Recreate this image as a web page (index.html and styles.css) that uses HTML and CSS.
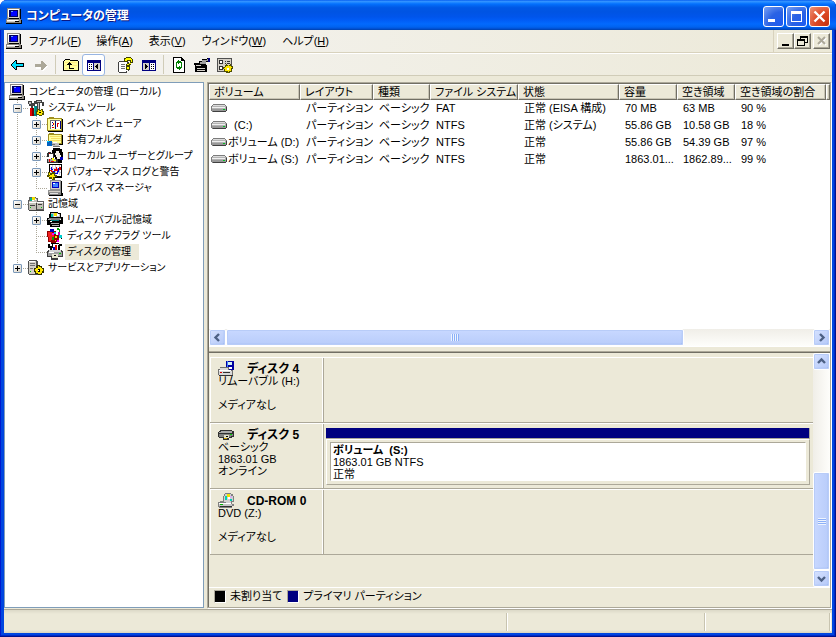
FILE: index.html
```html
<!DOCTYPE html>
<html lang="ja">
<head>
<meta charset="utf-8">
<title>コンピュータの管理</title>
<link rel="stylesheet" href="styles.css">
</head>
<body>
<svg class="sprite" aria-hidden="true">
  <symbol id="computer" viewBox="0 0 16 16">
    <path fill="#8c8880" d="M1 0h13v11H1zM0 11h15v4H0z"/>
    <path fill="#d4d0c8" d="M2 1h11v9H2zM1 12h12v2H1z"/>
    <path fill="#fff" d="M2 1h11v1H2zM2 1h1v8H2zM1 12h11v1H1z"/>
    <path fill="#000" d="M14 1h1v10h-1zM0 15h15v1H0zM15 12h1v4h-1zM9 13h4v1H9zM3 10h10v1H3z"/>
    <path fill="#000060" d="M3 2h9v7H3z"/><path fill="#0000ff" d="M5 3h6v5H5z"/>
    <path fill="#6a9cff" d="M5 3h2v1H5z"/>
  </symbol>
  <symbol id="tools" viewBox="0 0 16 16">
    <path fill="#404040" d="M0 1h4v2h2V1h1v5H5v3H3V6H1V4H0zM8 0h6v2h2v4h-2V3h-2v7H9V4H7V1z"/>
    <path fill="#c0c0c0" d="M1 2h2v2H1zM9 1h4v1H9zM10 3h1v6h-1z"/>
    <path fill="#e00000" d="M2 8h3v8H2z"/><path fill="#800000" d="M4 8h2v8H4z"/>
    <path fill="#008080" d="M6 6h3v10H6z"/><path fill="#00c0a0" d="M6 7h1v7H6z"/>
    <path fill="#505000" d="M9 9h2v1h2V9h2v2h1v4h-2v1h-3v-1H8v-4h1z"/>
    <path fill="#ffe800" d="M10 10h1v1h2v-1h1v2h1v1h-1v2h-3v-1H9v-2h1z"/><path d="M11 12h2v1h-2z"/>
  </symbol>
  <symbol id="event" viewBox="0 0 16 16">
    <path fill="#a09020" d="M0 2h2V1h5v1h8v13H0z"/><path fill="#ffff9c" d="M1 3h13v11H1z"/>
    <path fill="#000" d="M15 3h1v13H1v-1h14z"/><path fill="#707070" d="M3 4h10v1H3zM3 4h1v9H3z"/>
    <path fill="#fff" d="M4 5h3v8H4zM8 5h5v8H8z"/>
    <path fill="#000080" d="M5 6h1v1H5zM5 9h1v1H5zM8 5h1v8H8zM13 5h1v8h-1z"/>
    <path fill="#e00000" d="M6 7h1v2H6zM10 7h2v1h-2zM10 8h1v3h-1zM5 11h2v1H5z"/>
  </symbol>
  <symbol id="folder" viewBox="0 0 16 16">
    <path fill="#a09020" d="M1 2h1V1h5v1h8v10H1z"/><path fill="#ffff9c" d="M2 3h12v8H2z"/>
    <path fill="#f4dc60" d="M3 4h11v1H3zM4 6h10v1H4zM3 8h11v1H3z"/><path d="M15 3h1v10H7v-1h8z"/>
    <path fill="#0060c0" d="M0 9h5v5H0z"/><path fill="#00d8ff" d="M0 9h2v1H0z"/>
    <path fill="#c0c0c0" d="M5 10h5v1h2v3H5z"/><path fill="#707070" d="M6 14h7v1H6zM5 12h3v1H5z"/><path fill="#fff" d="M6 10h4v1H6z"/>
  </symbol>
  <symbol id="users" viewBox="0 0 16 16">
    <path d="M6 0h7v1h2v3h1v5h-2v2h1v4h-4v-2H8V9H5V2h1z"/>
    <path fill="#f4f0e8" d="M9 3h3v2h1v2h1v4h-3v2h-1V9H9V7H8V5h1z"/><path fill="#0000c0" d="M13 9h3v3h-3z"/>
    <path fill="#303030" d="M1 4h3v1h3v6h4v4H0v-4h2V9H0V5h1z"/><path fill="#fff" d="M2 6h4v4H4v1H2z"/>
    <path fill="#9c9c9c" d="M1 11h8v3H1z"/><path fill="#ffff00" d="M5 10h2v2h2v1H6v-1H5z"/><path fill="#e00000" d="M2 5h1v1H2zM2 11h1v3H2zM4 13h3v1H4z"/>
  </symbol>
  <symbol id="perf" viewBox="0 0 16 16">
    <path d="M2 0h13v14H2z"/><path fill="#fff" d="M3 1h11v11H3z"/>
    <path fill="#c8c8dc" d="M5 1h1v10H5zM8 1h1v10H8zM12 1h1v10h-1zM3 4h11v1H3zM3 8h11v1H3z"/>
    <path fill="#e00000" d="M3 6h2v1h2V5h2V3h1v4H8v1H4zM10 5h2V3h2v3h-2v1h-2z"/>
    <path fill="#0000e0" d="M4 3h1v2h1v2h2v2h2V7h1V4h1v4h-1v2H8V8H6V6H4z"/>
    <path fill="#505000" d="M1 8h2v1h2V8h3v3h2v2H8v3H5v-1H2v-2H0v-2h1z"/><path fill="#ffe800" d="M2 9h1v2h2v-1h2v2h1v1H6v2H5v-2H2v-1h1v-1H2z"/>
  </symbol>
  <symbol id="device" viewBox="0 0 16 16">
    <path fill="#909090" d="M3 0h11v10H3zM1 10h13v3H1z"/><path fill="#d4d0c8" d="M4 1h9v8H4zM2 11h11v1H2z"/>
    <path fill="#0000c0" d="M5 2h7v6H5z"/><path fill="#4084ff" d="M6 3h5v4H6z"/><path fill="#fff" d="M6 3h2v1H6z"/>
    <path d="M14 1h1v12h1v3H2v-1h12z"/><path fill="#808080" d="M1 13h13v2H1z"/><path fill="#e0e0e0" d="M3 13h8v1H3z"/>
  </symbol>
  <symbol id="storage" viewBox="0 0 16 16">
    <path fill="#606060" d="M1 1h7v1h2v3h6v10H1v-1H0V4h1z"/><path fill="#c4c0b8" d="M2 2h6v1h1v3h6v7H9v1H1V5h1z"/>
    <path fill="#00b090" d="M2 2h2v3H2z"/><path fill="#f0e000" d="M4 1h3v3H4z"/><path fill="#fff" d="M4 4h2v1H4zM7 3h1v1H7zM1 6h7v1H1zM9 6h6v1H9z"/>
    <path fill="#404040" d="M8 7h1v7H8zM2 9h5v1H2zM10 8h4v1h-4zM1 14h15v1H1z"/><path fill="#00c000" d="M2 11h1v1H2zM13 11h1v1h-1z"/>
  </symbol>
  <symbol id="removable" viewBox="0 0 16 16">
    <path d="M3 0h8v1h3v4h2v7h-3v3H3v-2H0V6h2V2h1z"/><path fill="#c0c0c0" d="M4 1h7v1h2v3H4z"/>
    <path fill="#f0e000" d="M7 1h3v3H7z"/><path fill="#00c8b0" d="M4 2h2v3H4z"/><path fill="#fff" d="M7 4h2v1H7zM10 2h2v2h-2z"/>
    <path fill="#808080" d="M2 6h12v2H2z"/><path fill="#008080" d="M4 8h8v1H4z"/><path fill="#b0b0b0" d="M1 7h3v1H1zM4 11h8v1H4zM5 13h7v1H5z"/><path fill="#fff" d="M13 7h1v1h-1zM3 9h2v1H3z"/>
  </symbol>
  <symbol id="defrag" viewBox="0 0 16 16">
    <path fill="#900000" d="M0 3h3V1h4v2h2v4h3v7H9v1H4v-1H1z"/><path fill="#f02020" d="M1 4h4v3h2v5H4v1H2z"/>
    <path fill="#0000c0" d="M3 1h4v3H3z"/><path fill="#ff00ff" d="M5 5h2v2H5zM10 12h2v2h-2z"/>
    <path fill="#00a000" d="M10 0h2v1h1v3h-1V2h-2zM5 9h2v3H5z"/><path fill="#00d0d0" d="M12 7h3v3h-3zM7 4h2v2H7z"/>
    <path fill="#c000c0" d="M11 4h2v3h-2z"/><path fill="#f0e000" d="M8 8h2v2H8zM8 12h1v1H8z"/><path d="M4 15h8v1H4zM14 10h1v1h-1z"/>
  </symbol>
  <symbol id="disks" viewBox="0 0 16 16">
    <path d="M1 0h2v2h2V0h1v4H5v3H3V4H1zM12 0h3v2h-2v5h-2V1h1z"/><path fill="#e00000" d="M8 1h2v6H8z"/><path fill="#0000c0" d="M6 3h2v4H6z"/>
    <path fill="#404040" d="M1 6h14v1h1v6h-5v3H4v-3H0V7h1z"/><path fill="#d4d4d4" d="M2 6h12v2H2z"/><path fill="#a0a0a0" d="M1 8h14v4H1z"/>
    <path fill="#fff" d="M2 8h5v1H2z"/><path fill="#00d000" d="M12 9h2v1h-2z"/><path fill="#e8e8d0" d="M5 10h6v4H5z"/><path d="M7 11h2v1H7z"/>
  </symbol>
  <symbol id="services" viewBox="0 0 16 16">
    <path fill="#505050" d="M1 0h8v1h1v14H1v-1H0V1h1z"/><path fill="#d4d0c8" d="M1 1h7v13H1z"/><path fill="#fff" d="M1 1h6v1H1z"/>
    <path fill="#707070" d="M2 3h5v1H2zM2 5h5v1H2zM2 8h3v1H2z"/><path fill="#00c000" d="M2 11h1v1H2z"/>
    <path fill="#303000" d="M9 5h3v1h2v2h2v5h-2v2h-4v-1H7v-2H6V8h2V6h1z"/><path fill="#ffe800" d="M10 6h1v1h2v1h1v1h1v2h-1v2h-1v1h-3v-1H8v-2H7V9h1V8h2z"/><path d="M10 9h2v3h-2z"/><path fill="#fff" d="M10 10h1v1h-1z"/>
  </symbol>
  <symbol id="drive" viewBox="0 0 16 8">
    <path fill="#7c7c7c" d="M2 0h12v1h1v1h1v5h-1v1H1V7H0V2h1V1h1z"/><path fill="#dcdcdc" d="M2 1h12v1H2z"/><path fill="#b4b4b4" d="M1 2h14v3H1z"/>
    <path fill="#f0f0f0" d="M1 3h13v1H1z"/><path fill="#989898" d="M1 5h14v2H1z"/><path fill="#00c020" d="M12 5h2v1h-2z"/><path fill="#404040" d="M15 3h1v4h-1zM2 7h13v1H2z"/>
  </symbol>
  <symbol id="floppydrive" viewBox="0 0 16 16">
    <path fill="#0000a0" d="M8 0h8v9H9V7H8z"/><path fill="#4080ff" d="M9 0h1v6H9z"/><path fill="#d0f0f0" d="M10 1h4v3h-4z"/><path fill="#fff" d="M11 6h3v2h-3z"/>
    <path fill="#707070" d="M2 6h9v3h4v6H1v-1H0V8h2z"/><path fill="#d8d8d8" d="M2 7h8v3H2zM1 10h13v4H1z"/><path fill="#fff" d="M1 9h12v1H1z"/><path fill="#303030" d="M5 11h7v1H5zM1 14h14v1H1z"/><path fill="#e00000" d="M2 11h2v1H2z"/>
  </symbol>
  <symbol id="harddisk" viewBox="0 0 16 16">
    <path fill="#303030" d="M2 3h12v1h2v6h-2v1h-3v2H5v-2H1v-1H0V5h1V4h1z"/><path fill="#a8a8a8" d="M3 4h11v2H1V5h2z"/><path fill="#808080" d="M1 7h14v2H1zM1 9h12v1H1z"/>
    <path fill="#00d000" d="M12 7h2v1h-2z"/><path fill="#e0e0c8" d="M6 8h5v3H6z"/><path d="M8 9h2v1H8z"/><path fill="#d0a000" d="M6 11h3v1H6z"/>
  </symbol>
  <symbol id="cdrom" viewBox="0 0 16 16">
    <path fill="#808080" d="M7 0h6v1h2v2h1v6h-2v2h2v2h-2v2H1v-1H0V9h2V8h3V3h1V1h1z"/><path fill="#d0d0d0" d="M7 1h6v2h2v5h-2v2H8V9H6V3h1z"/>
    <path fill="#f0e000" d="M9 1h3v3H9z"/><path fill="#00d0b0" d="M7 3h2v4H7zM12 6h2v2h-2z"/><path fill="#d8b0f0" d="M12 3h2v2h-2z"/><path fill="#fff" d="M10 4h2v2h-2zM1 10h12v1H1z"/>
    <path fill="#c8c8c8" d="M1 11h13v2H1z"/><path fill="#00b000" d="M2 11h3v1H2z"/><path fill="#303030" d="M2 13h12v1H2z"/>
  </symbol>
  <symbol id="back" viewBox="0 0 16 16"><path d="M1 7h1V6h1V5h1V4h1V3h2v3h7v4H7v3H5v-1H4v-1H3v-1H2V9H1z"/><path fill="#00e0ff" d="M2 9V7h1V6h1V5h1V4h1v3h7v2H6v3H5v-1H4v-1H3V9z"/></symbol>
  <symbol id="forward" viewBox="0 0 16 16"><path fill="#fff" d="M3 8h6V5h2v1h1v1h1v1h1v1h1v1h-1v1h-1v1h-1v1h-1v1H9v-2H3z"/><path fill="#aca899" d="M2 7h6V4h2v1h1v1h1v1h1v1h1v1h-1v1h-1v1h-1v1h-1v1H8v-3H2z"/></symbol>
  <symbol id="up" viewBox="0 0 16 16"><path d="M1 3h1V2h5v1h8v1h1v10H0V4h1z"/><path fill="#ffff9c" d="M2 3h5v1h8v9H1V4h1z"/><path fill="#ffec80" d="M2 5h12v1H2zM2 8h2v1H2zM9 8h5v1H9zM2 11h3v1H2z"/><path d="M6 5h1v1h1v1h1v1H7v3h4v1H6V8H4V7h1V6h1z"/></symbol>
  <symbol id="treeview" viewBox="0 0 16 16"><path fill="#000080" d="M1 3h14v11H1z"/><path fill="#fff" d="M2 6h5v7H2z"/><path fill="#d4d0c8" d="M8 6h6v7H8z"/><path d="M3 7h1v1H3zM5 7h1v1H5zM3 9h1v1H3zM5 9h1v1H5zM3 11h1v1H3zM5 11h1v1H5zM9 9h1V8h1V7h1v5h-1v-1h-1v-1H9z"/></symbol>
  <symbol id="actionpane" viewBox="0 0 16 16"><path fill="#000080" d="M1 3h14v11H1z"/><path fill="#d4d0c8" d="M2 6h6v7H2z"/><path fill="#fff" d="M9 6h5v7H9z"/><path d="M4 7h1v1h1v1h1v1H6v1H5v1H4zM10 7h1v1h-1zM12 7h1v1h-1zM10 9h1v1h-1zM12 9h1v1h-1zM10 11h1v1h-1zM12 11h1v1h-1z"/></symbol>
  <symbol id="help" viewBox="0 0 16 16"><path fill="#404040" d="M1 4h8v1h2v9H9v2H1v-1H0V5h1z"/><path fill="#fff" d="M1 5h8v8h1v1H8v1H1z"/><path fill="#707070" d="M3 7h4v1H3zM3 9h4v1H3zM3 11h4v1H3z"/><path fill="#404000" d="M6 1h2V0h5v1h1v1h1v4h-2v2h-1v5H8V7h2V6h2V4h-2v1H6z"/><path fill="#ffff00" d="M7 2h1V1h5v1h1v3h-1v2h-2v1H9V7h2V6h2V3H9v1H7zM9 10h2v2H9z"/></symbol>
  <symbol id="refresh" viewBox="0 0 16 16"><path d="M2 0h9v1h1v1h1v1h1v13H2z"/><path fill="#fff" d="M3 1h7v3h3v11H3z"/><path fill="#008000" d="M7 3h1v1h2v1h1v3h-1V6H8v1H7V6H6v2H5V5h1V4h1zM5 8h1v2h2V9h1v1h1V8h1v3h-1v1H9v1H8v-1H6v-1H5z"/></symbol>
  <symbol id="properties" viewBox="0 0 16 16"><path d="M0 6h5V4h3V2h5V1h2v4h-3v3h1v7H1V8H0z"/><path fill="#a0a0a0" d="M8 3h5V2h1v2h-2v3H6V5h2z"/><path fill="#000080" d="M14 1h2v4h-2z"/><path fill="#d4d0c8" d="M2 8h5v1H2zM3 11h8v1H3zM3 13h8v1H3z"/></symbol>
  <symbol id="settings" viewBox="0 0 16 16"><path fill="#505050" d="M0 1h15v9h-3v5H0z"/><path fill="#d4d0c8" d="M1 2h13v7H9v5H1z"/><path fill="#303030" d="M2 3h4v4H2zM8 4h1v1H8zM10 4h3v1h-3zM8 6h1v1H8zM10 6h3v1h-3zM2 9h4v4H2z"/><path fill="#fff" d="M3 4h2v2H3zM3 10h2v2H3z"/><path fill="#505000" d="M9 7h1v1h3V7h1v2h2v3h-1v3h-2v1H9v-1H7v-3H6v-2h2V8h1z"/><path fill="#ffe800" d="M9 9h2V8h1v1h2v1h1v1h-1v3h-2v1h-1v-1H8v-2H7v-1h1v-1h1z"/><path fill="#fff" d="M10 11h2v2h-2z"/></symbol>
</svg>

<div class="window">
  <header class="titlebar">
    <svg class="icon"><use href="#computer"/></svg>
    <h1 class="title">コンピュータの管理</h1>
    <div class="captions">
      <button class="caption" aria-label="最小化"><svg viewBox="0 0 21 21"><path fill="#fff" d="M5 13h7v3H5z"/></svg></button>
      <button class="caption" aria-label="最大化"><svg viewBox="0 0 21 21"><path fill="#fff" fill-rule="evenodd" d="M5 5h11v11H5zM6 8v7h9V8z"/></svg></button>
      <button class="caption close" aria-label="閉じる"><svg viewBox="0 0 21 21"><path class="smooth" stroke="#fff" stroke-width="2.4" d="M5.5 5.5l10 10M15.5 5.5l-10 10"/></svg></button>
    </div>
  </header>

  <nav class="menubar">
    <svg class="icon"><use href="#computer"/></svg>
    <div class="menus">
      <button>ファイル(<u>F</u>)</button>
      <button>操作(<u>A</u>)</button>
      <button>表示(<u>V</u>)</button>
      <button>ウィンドウ(<u>W</u>)</button>
      <button>ヘルプ(<u>H</u>)</button>
    </div>
    <div class="mdi">
      <button aria-label="ウィンドウを最小化"><svg viewBox="0 0 13 12"><path d="M3 9h7v2H3z"/></svg></button>
      <button aria-label="元のサイズに戻す"><svg viewBox="0 0 13 12"><path fill-rule="evenodd" d="M4 1h8v7H9v3H1V4h3zM5 3v1h4v3h2V3zM2 6v4h6V6z"/></svg></button>
      <button class="apart" aria-label="ウィンドウを閉じる" disabled><svg viewBox="0 0 13 12"><path class="smooth" stroke="#fff" stroke-width="2" d="M4 3l7 7M11 3l-7 7"/><path class="smooth" stroke="#aca899" stroke-width="2" d="M3 2l7 7M10 2l-7 7"/></svg></button>
    </div>
  </nav>

  <div class="toolbar">
    <button aria-label="戻る"><svg class="icon"><use href="#back"/></svg></button>
    <button aria-label="進む"><svg class="icon"><use href="#forward"/></svg></button>
    <span class="sep"></span>
    <button aria-label="上へ"><svg class="icon"><use href="#up"/></svg></button>
    <button class="pressed" aria-label="コンソール ツリー"><svg class="icon"><use href="#treeview"/></svg></button>
    <span class="sep wide"></span>
    <button aria-label="ヘルプ"><svg class="icon"><use href="#help"/></svg></button>
    <button aria-label="操作ウィンドウ"><svg class="icon"><use href="#actionpane"/></svg></button>
    <span class="sep"></span>
    <button aria-label="最新の情報に更新"><svg class="icon"><use href="#refresh"/></svg></button>
    <button aria-label="プロパティ"><svg class="icon"><use href="#properties"/></svg></button>
    <button aria-label="設定"><svg class="icon"><use href="#settings"/></svg></button>
  </div>

  <main class="content">
    <aside class="tree">
      <div class="node"><svg class="icon"><use href="#computer"/></svg><span class="label">コンピュータの管理 (ローカル)</span></div>
      <ul>
        <li>
          <div class="node"><span class="branch"><button class="expander open" aria-label="折りたたむ"></button></span><svg class="icon"><use href="#tools"/></svg><span class="label">システム ツール</span></div>
          <ul>
            <li><div class="node"><span class="branch"><button class="expander" aria-label="展開"></button></span><svg class="icon"><use href="#event"/></svg><span class="label">イベント ビューア</span></div></li>
            <li><div class="node"><span class="branch"><button class="expander" aria-label="展開"></button></span><svg class="icon"><use href="#folder"/></svg><span class="label">共有フォルダ</span></div></li>
            <li><div class="node"><span class="branch"><button class="expander" aria-label="展開"></button></span><svg class="icon"><use href="#users"/></svg><span class="label">ローカル ユーザーとグループ</span></div></li>
            <li><div class="node"><span class="branch"><button class="expander" aria-label="展開"></button></span><svg class="icon"><use href="#perf"/></svg><span class="label">パフォーマンス ログと警告</span></div></li>
            <li><div class="node"><span class="branch"></span><svg class="icon"><use href="#device"/></svg><span class="label">デバイス マネージャ</span></div></li>
          </ul>
        </li>
        <li>
          <div class="node"><span class="branch"><button class="expander open" aria-label="折りたたむ"></button></span><svg class="icon"><use href="#storage"/></svg><span class="label">記憶域</span></div>
          <ul>
            <li><div class="node"><span class="branch"><button class="expander" aria-label="展開"></button></span><svg class="icon"><use href="#removable"/></svg><span class="label">リムーバブル記憶域</span></div></li>
            <li><div class="node"><span class="branch"></span><svg class="icon"><use href="#defrag"/></svg><span class="label">ディスク デフラグ ツール</span></div></li>
            <li><div class="node"><span class="branch"></span><svg class="icon"><use href="#disks"/></svg><span class="label selected">ディスクの管理</span></div></li>
          </ul>
        </li>
        <li><div class="node"><span class="branch"><button class="expander" aria-label="展開"></button></span><svg class="icon"><use href="#services"/></svg><span class="label">サービスとアプリケーション</span></div></li>
      </ul>
    </aside>

    <section class="detail">
      <div class="volumes">
        <div class="tablewrap">
          <table>
            <colgroup><col class="c-name"><col class="c-layout"><col class="c-type"><col class="c-fs"><col class="c-state"><col class="c-size"><col class="c-size"><col class="c-pct"><col></colgroup>
            <thead><tr><th>ボリューム</th><th>レイアウト</th><th>種類</th><th>ファイル システム</th><th>状態</th><th>容量</th><th>空き領域</th><th>空き領域の割合</th><th></th></tr></thead>
            <tbody>
              <tr><td><svg class="drive"><use href="#drive"/></svg></td><td>パーティション</td><td>ベーシック</td><td>FAT</td><td>正常 (EISA 構成)</td><td>70 MB</td><td>63 MB</td><td>90 %</td><td></td></tr>
              <tr><td><svg class="drive"><use href="#drive"/></svg>&nbsp; (C:)</td><td>パーティション</td><td>ベーシック</td><td>NTFS</td><td>正常 (システム)</td><td>55.86 GB</td><td>10.58 GB</td><td>18 %</td><td></td></tr>
              <tr><td><svg class="drive"><use href="#drive"/></svg>ボリューム (D:)</td><td>パーティション</td><td>ベーシック</td><td>NTFS</td><td>正常</td><td>55.86 GB</td><td>54.39 GB</td><td>97 %</td><td></td></tr>
              <tr><td><svg class="drive"><use href="#drive"/></svg>ボリューム (S:)</td><td>パーティション</td><td>ベーシック</td><td>NTFS</td><td>正常</td><td>1863.01...</td><td>1862.89...</td><td>99 %</td><td></td></tr>
            </tbody>
          </table>
        </div>
        <div class="scroll horizontal">
          <button class="arrow" aria-label="左へ"><svg viewBox="0 0 9 9"><path d="M6 1L2.500 4.500L6 8"/></svg></button>
          <div class="track"><div class="thumb"></div></div>
          <button class="arrow" aria-label="右へ"><svg viewBox="0 0 9 9"><path d="M3 1L6.500 4.500L3 8"/></svg></button>
        </div>
      </div>

      <div class="splitter"></div>

      <div class="lower">
        <div class="diskview">
          <div class="disks">
            <article class="disk">
              <div class="diskinfo"><h2><svg class="icon"><use href="#floppydrive"/></svg>ディスク 4</h2><p>リムーバブル (H:)</p><p>&nbsp;</p><p>メディアなし</p></div>
              <div class="partitions"></div>
            </article>
            <article class="disk">
              <div class="diskinfo"><h2><svg class="icon"><use href="#harddisk"/></svg>ディスク 5</h2><p>ベーシック</p><p>1863.01 GB</p><p>オンライン</p></div>
              <div class="partitions"><div class="stripe"></div><div class="partition"><div class="face"><h3>ボリューム &nbsp;(S:)</h3><p>1863.01 GB NTFS</p><p>正常</p></div></div></div>
            </article>
            <article class="disk">
              <div class="diskinfo"><h2><svg class="icon"><use href="#cdrom"/></svg>CD-ROM 0</h2><p>DVD (Z:)</p><p>&nbsp;</p><p>メディアなし</p></div>
              <div class="partitions"></div>
            </article>
          </div>
          <div class="scroll vertical">
            <button class="arrow" aria-label="上へスクロール"><svg viewBox="0 0 9 9"><path d="M1 6L4.500 2.500L8 6"/></svg></button>
            <div class="track"><div class="thumb"></div></div>
            <button class="arrow" aria-label="下へスクロール"><svg viewBox="0 0 9 9"><path d="M1 3L4.500 6.500L8 3"/></svg></button>
          </div>
        </div>
        <div class="legend"><span class="swatch"></span>未割り当て<span class="swatch primary"></span>プライマリ パーティション</div>
      </div>
    </section>
  </main>

  <footer class="status"><span></span><span></span><span></span></footer>
</div>
</body>
</html>
```

FILE: styles.css
```css
* { box-sizing: border-box; }

html, body { height: 100%; }

body {
  margin: 0;
  background: #fff;
  color: #000;
  font: 11px/16px "Liberation Sans", "Noto Sans CJK JP", sans-serif;
  font-feature-settings: "palt";
  overflow: hidden;
}

button {
  margin: 0;
  padding: 0;
  border: 0;
  background: none;
  color: inherit;
  font: inherit;
  font-feature-settings: inherit;
}

h1, h2, h3, p, ul { margin: 0; padding: 0; font-size: inherit; list-style: none; }

svg { display: block; shape-rendering: crispEdges; }
.smooth { shape-rendering: auto; fill: none; }
.sprite { display: none; }
.icon { flex: none; width: 16px; height: 16px; }

.window {
  display: flex;
  flex-direction: column;
  height: 100vh;
  padding: 0 4px 4px;
  border-radius: 7px 7px 0 0;
  background: #0046e0;
  box-shadow: inset -1px -1px #00138c, inset 1px 0 #0019cf, inset -2px -2px #0029c8;
  overflow: hidden;
}

/* Title bar */
.titlebar {
  display: flex;
  align-items: center;
  flex: none;
  height: 30px;
  margin: 0 -4px;
  padding: 2px 6px 0;
  background: linear-gradient(#0058ee 0, #3593ff 4%, #288eff 7%, #127dff 10%, #036ffc 14%, #0262ee 20%, #0057e5 26%, #0054e3 40%, #0055eb 56%, #005bf5 66%, #026afe 80%, #0062ef 90%, #0052d6 95%, #0040ab 100%);
}
.title {
  flex: 1;
  margin-left: 4px;
  color: #fff;
  font-size: 12px;
  font-weight: bold;
  text-shadow: 1px 1px #0a1883;
}
.captions { display: flex; gap: 2px; }
.caption {
  width: 21px;
  height: 21px;
  border: 1px solid #fff;
  border-radius: 3px;
  background: radial-gradient(circle at 90% 90%, #1e5cf0 0, #2a62e4 50%, #7aa2f4 100%);
}
.caption.close { background: radial-gradient(circle at 90% 90%, #c83410 0, #dd4a26 50%, #ee9478 100%); }
.caption svg { width: 21px; height: 21px; margin: -1px; }

/* Menu bar */
.menubar {
  display: flex;
  align-items: center;
  flex: none;
  height: 23px;
  padding-left: 2px;
  border-bottom: 1px solid #d8d2bd;
  background: linear-gradient(90deg, #f5f4f2, #ece9d8);
}
.menus { display: flex; flex: 1; }
.menus button { padding: 0 8px; }
.menus button:first-child { padding: 0 7px; }
.mdi {
  display: flex;
  align-items: center;
  align-self: stretch;
  padding: 0 2px 0 3px;
  border-left: 1px solid #d8d2bd;
}
.mdi button {
  width: 17px;
  height: 16px;
  border: 1px solid;
  border-color: #fff #716f64 #716f64 #fff;
  background: #ece9d8;
  box-shadow: inset -1px -1px #aca899;
}
.mdi .apart { margin-left: 2px; }
.mdi svg { width: 13px; height: 12px; margin: 1px; }

/* Toolbar */
.toolbar {
  display: flex;
  align-items: center;
  flex: none;
  height: 23px;
  padding-left: 2px;
  border-top: 1px solid #fff;
  border-bottom: 1px solid #d0ccb8;
  background: linear-gradient(90deg, #f5f4f2, #ece9d8);
}
.toolbar button {
  display: grid;
  place-items: center;
  width: 23px;
  height: 22px;
}
.toolbar .pressed { border: 1px solid #98b5e2; border-radius: 3px; background: #fff; }
.sep { width: 1px; height: 19px; margin: 0 3px; background: #d0ccb8; }
.sep.wide { margin: 0 4px; background: none; }

.content {
  display: grid;
  grid-template-columns: 200px minmax(0, 1fr);
  gap: 3px;
  flex: 1;
  min-height: 0;
  padding: 6px 1px 1px 0;
  background: #ece9d8;
}

/* Console tree */
.tree {
  min-width: 0;
  padding: 1px 0 0 4px;
  border: 1px solid #7f9db9;
  background: #fff;
  font-size: 10px;
  overflow: hidden;
  white-space: nowrap;
}
.tree li > ul {
  padding-left: 19px;
  background: repeating-linear-gradient(#aca899 0 1px, transparent 1px 2px) 8px 0 / 1px 100% no-repeat;
}
.node { display: flex; align-items: center; height: 16px; }
.branch {
  display: grid;
  place-content: center start;
  flex: none;
  width: 19px;
  height: 16px;
  padding-left: 4px;
  background:
    repeating-linear-gradient(#aca899 0 1px, transparent 1px 2px) 8px 0 / 1px 100% no-repeat,
    repeating-linear-gradient(90deg, #aca899 0 1px, transparent 1px 2px) 8px 8px / 11px 1px no-repeat;
}
.tree li:last-child > .node > .branch { background-size: 1px 8px, 11px 1px; }
.expander {
  width: 9px;
  height: 9px;
  border: 1px solid #7b98b8;
  border-radius: 1px;
  background:
    linear-gradient(#000, #000) center / 5px 1px no-repeat,
    linear-gradient(#000, #000) center / 1px 5px no-repeat,
    linear-gradient(135deg, #fff, #d8d2c6);
}
.expander.open {
  background:
    linear-gradient(#000, #000) center / 5px 1px no-repeat,
    linear-gradient(135deg, #fff, #d8d2c6);
}
.label { margin-left: 2px; padding: 0 2px; }
.label.selected { padding-right: 8px; background: #ece9d8; }

/* Right-hand pane */
.detail {
  display: grid;
  grid-template-rows: minmax(0, 263fr) 7px minmax(0, 254fr);
  min-width: 0;
  border: 1px solid #aca899;
  box-shadow: inset 1px 1px #716f64, 1px 1px #fff;
  padding: 1px 0 1px 1px;
}
.volumes { display: flex; flex-direction: column; background: #fff; min-width: 0; }
.tablewrap { flex: 1; min-height: 0; overflow: hidden; }
table { width: 100%; table-layout: fixed; border-collapse: separate; border-spacing: 0; }
.c-name { width: 91px; }
.c-layout { width: 73px; }
.c-type { width: 57px; }
.c-fs { width: 88px; }
.c-state { width: 101px; }
.c-size { width: 58px; }
.c-pct { width: 91px; }
th, td { padding: 0 0 0 6px; text-align: left; font-weight: normal; white-space: nowrap; overflow: hidden; }
th {
  height: 16px;
  padding-left: 4px;
  line-height: 14px;
  border: 1px solid;
  border-color: #fff #716f64 #716f64 #fff;
  background: #ece9d8;
  box-shadow: inset -1px -1px #c8c4b4;
}
td { height: 17px; line-height: 17px; }
td:first-child { padding-left: 2px; }
.drive { display: inline-block; width: 16px; height: 8px; margin-right: 1px; }

/* Scroll bars */
.scroll { display: flex; flex: none; }
.scroll .track { display: flex; flex: 1; }
.horizontal { height: 17px; background: linear-gradient(#f0eee8, #fefefb); }
.vertical { flex-direction: column; width: 17px; background: linear-gradient(90deg, #f0eee8, #fefefb); }
.vertical .track { flex-direction: column; justify-content: flex-end; }
.arrow, .thumb {
  border: 1px solid #fff;
  border-radius: 2px;
  background: linear-gradient(135deg, #d6e2ff, #b4c8f8);
  box-shadow: inset 0 0 0 1px #b8ccf8, inset -1px -1px 1px #88a8e8;
}
.arrow { display: grid; place-items: center; width: 17px; height: 17px; flex: none; }
.arrow svg { width: 9px; height: 9px; shape-rendering: auto; fill: none; stroke: #4d6185; stroke-width: 2.400; }
.thumb { display: grid; place-items: center; }
.horizontal .thumb { width: 78%; background: linear-gradient(#c8d8ff, #b8ccfa); }
.vertical .thumb { height: 49%; background: linear-gradient(90deg, #c8d8ff, #b8ccfa); }
.thumb::before { content: ""; width: 8px; height: 7px; background: repeating-linear-gradient(90deg, #eef4fe 0 1px, #8cb0f8 1px 2px); }
.vertical .thumb::before { background: repeating-linear-gradient(#eef4fe 0 1px, #8cb0f8 1px 2px); }

.splitter { border-top: 1px solid #fff; border-bottom: 1px solid #716f64; background: #ece9d8; box-shadow: inset 0 -1px #aca899; }

/* Disk map */
.lower { display: flex; flex-direction: column; min-height: 0; }
.diskview { display: flex; flex: 1; min-height: 0; }
.disks { flex: 1; min-width: 0; padding: 4px 0 0 1px; overflow: hidden; }
.disk {
  display: grid;
  grid-template-columns: 114px minmax(0, 1fr);
  height: 66px;
  border-top: 1px solid #fff;
  border-bottom: 1px solid #aca899;
  line-height: 12px;
}
.diskinfo {
  padding: 5px 0 0 7px;
  border-left: 1px solid #fff;
  border-right: 1px solid #aca899;
  box-shadow: inset -1px 0 #fff;
  white-space: nowrap;
}
.diskinfo h2 { display: flex; align-items: center; gap: 13px; height: 12px; font-size: 12px; }
.partitions { display: flex; flex-direction: column; padding: 4px 3px 3px 2px; }
.stripe { height: 11px; border-right: 1px solid #aca899; border-bottom: 1px solid #aca899; background: #000080; }
.partition {
  flex: 1;
  padding: 2px 3px 3px;
  border: 1px solid;
  border-color: #fff #aca899 #aca899 #fff;
}
.face {
  height: 100%;
  padding: 1px 0 0 2px;
  border: 1px solid;
  border-color: #aca899 #fff #fff #aca899;
  background: #fff;
}

.legend { display: flex; align-items: center; flex: none; height: 19px; padding: 0 0 2px 5px; border-top: 1px solid #fff; }
.swatch {
  width: 12px;
  height: 13px;
  margin-right: 4px;
  border: 1px solid;
  border-color: #aca899 #fff #fff #aca899;
  background: #000;
}
.swatch.primary { margin-left: 5px; background: #000080; }

/* Status bar */
.status {
  display: grid;
  grid-template-columns: 503fr 198fr 125fr;
  flex: none;
  height: 24px;
  padding: 3px 2px 2px 0;
  border-top: 1px solid #aca899;
  background: linear-gradient(#dcd9c8, #ece9d8 4px, #ece9d8 20px, #d8d4c0);
}
.status span { border-right: 1px solid #c8c4b0; box-shadow: 1px 0 #fff; }
```
